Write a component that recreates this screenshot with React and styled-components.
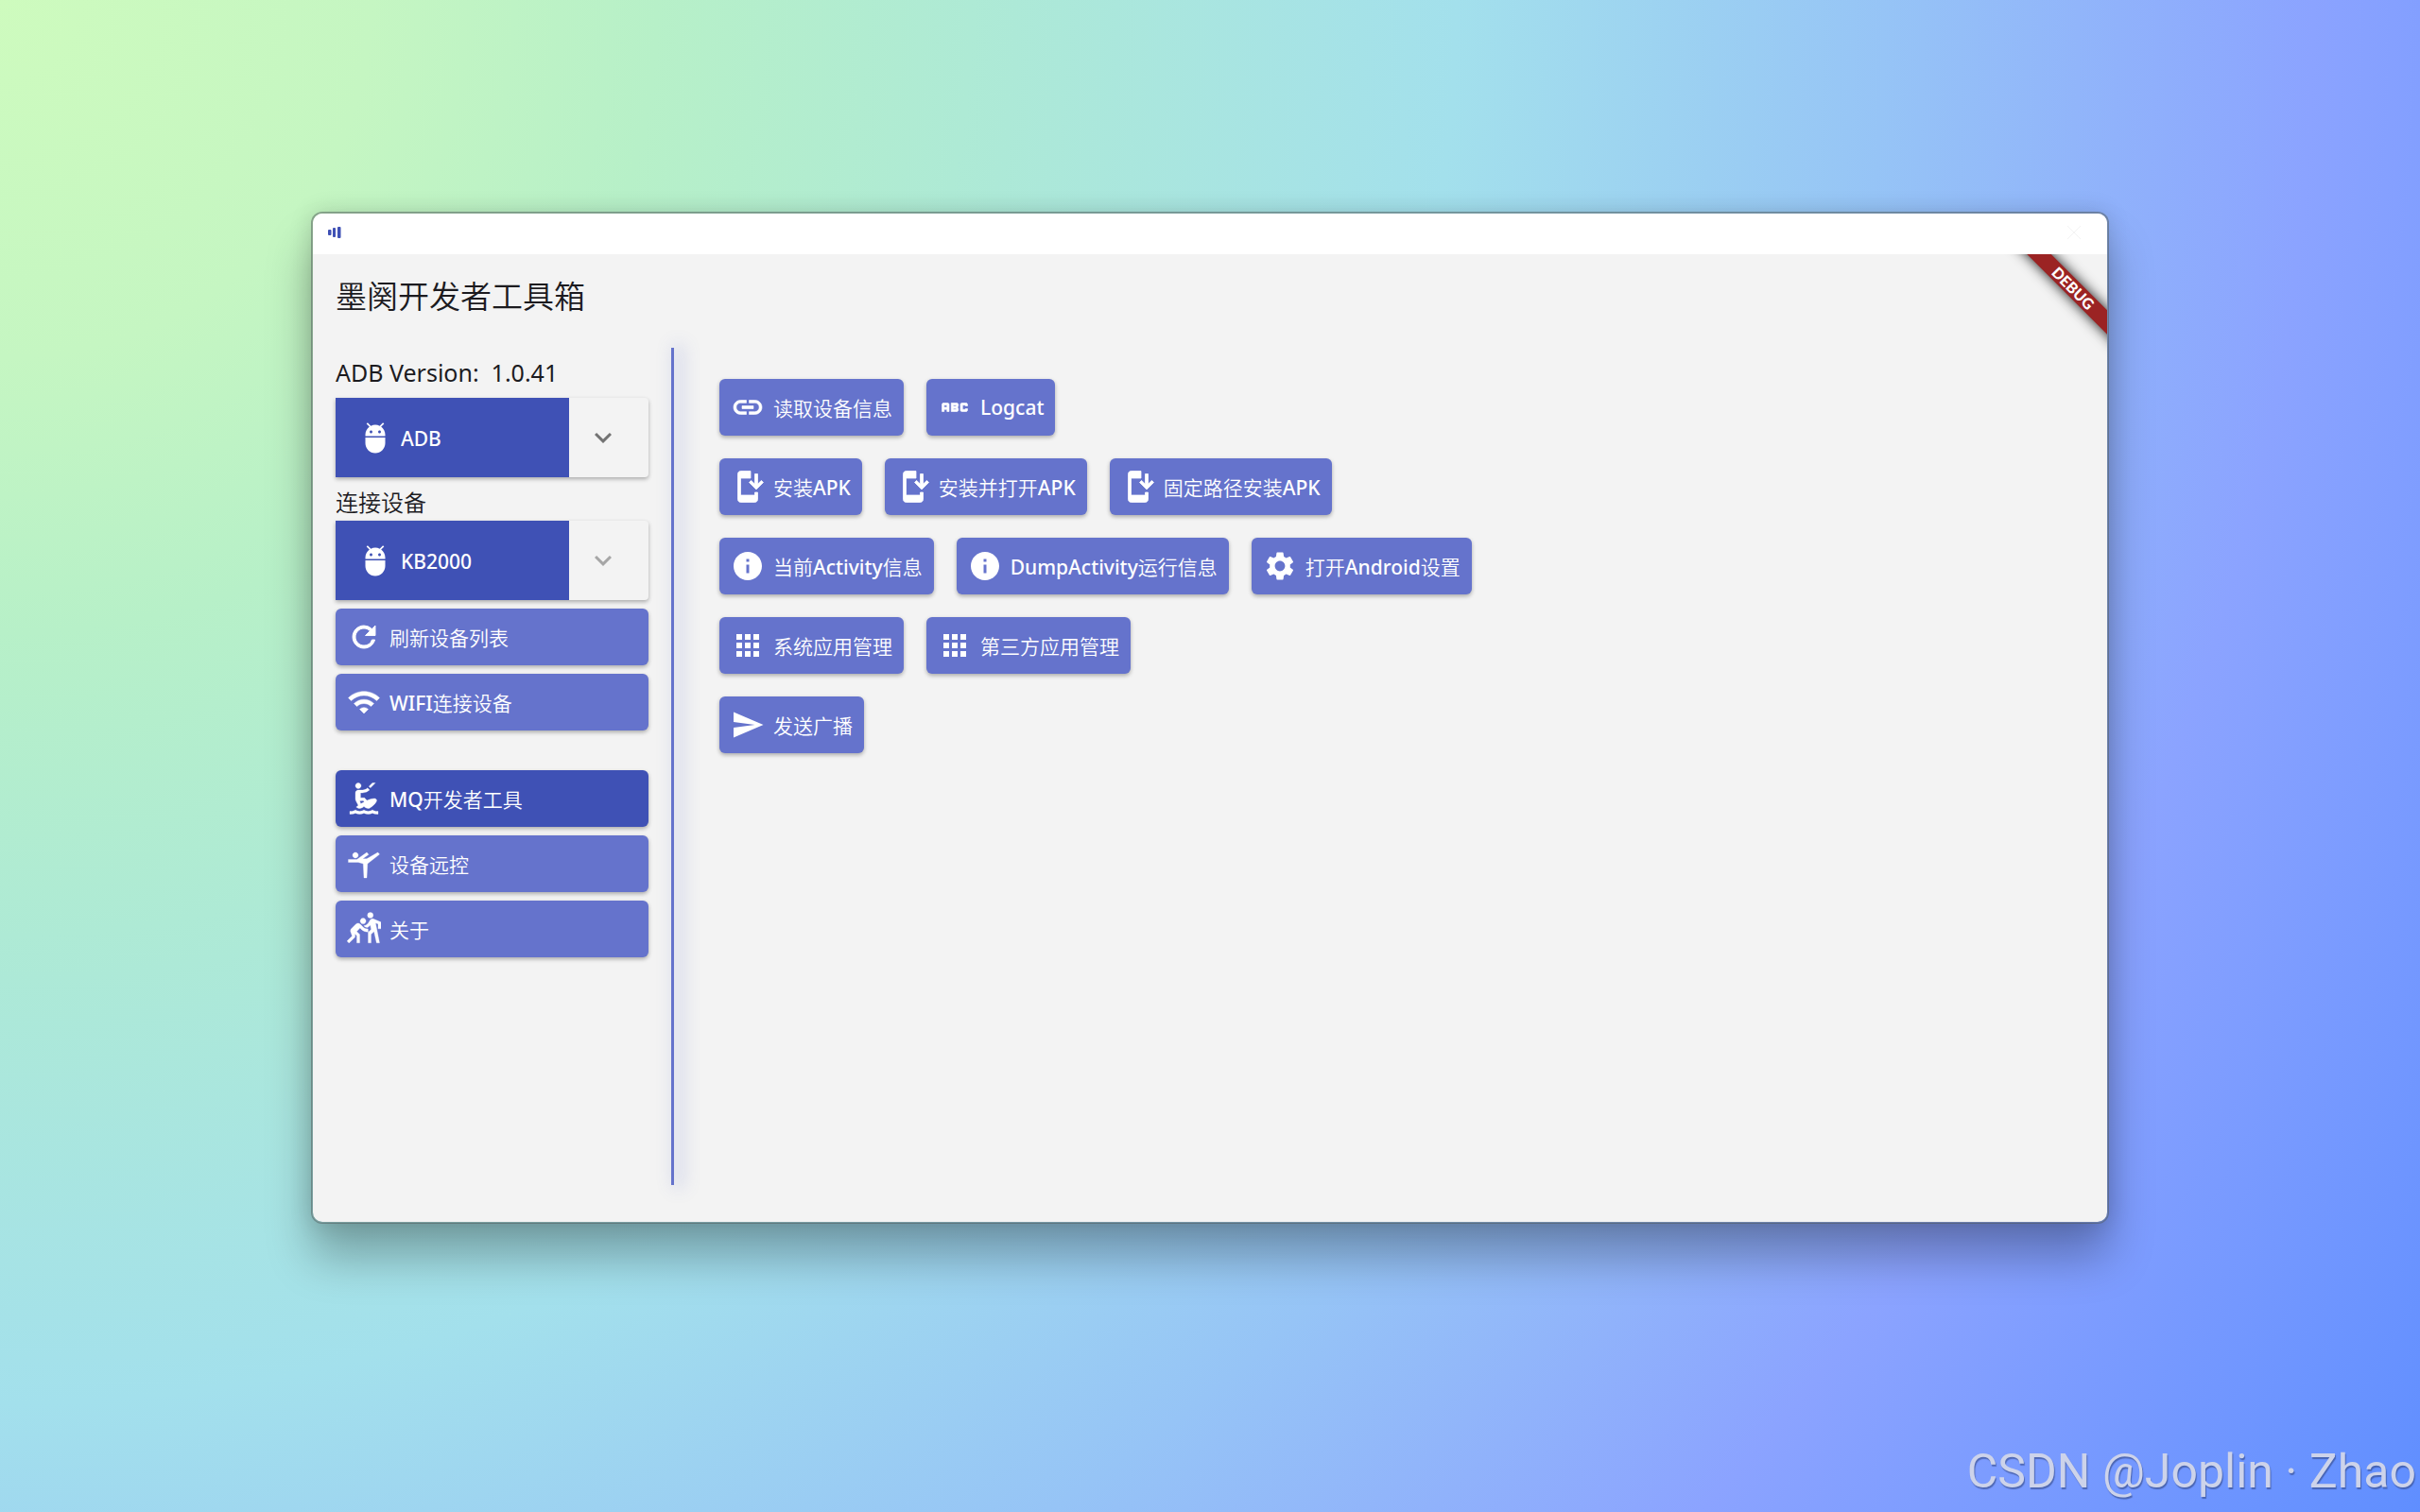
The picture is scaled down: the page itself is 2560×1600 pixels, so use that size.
import { useState } from "react";
import styled, { createGlobalStyle } from "styled-components";
import {
  MdAbc,
  MdAdb,
  MdApps,
  MdExpandMore,
  MdInfo,
  MdInstallMobile,
  MdKitesurfing,
  MdLink,
  MdRefresh,
  MdSend,
  MdSettings,
  MdSportsGymnastics,
  MdSportsKabaddi,
  MdWifi,
} from "react-icons/md";

const GlobalStyle = createGlobalStyle`
  * {
    box-sizing: border-box;
  }
  body {
    margin: 0;
    color: #1c1b1f;
    font-family: "Noto Sans", "Noto Sans CJK SC", sans-serif;
  }
`;

const Desktop = styled.div`
  position: relative;
  display: flex;
  min-height: 100vh;
  padding: 224px 329px 305px;
  overflow: hidden;
  background: radial-gradient(
    118% 182% at 0 0,
    #cefbbe 0%,
    #c5f6c2 13%,
    #b7f0c8 23%,
    #aeead5 34%,
    #a3e0ec 51%,
    #96c4f6 66%,
    #8ba3ff 81%,
    #5b8cff 103%
  );
`;

const Window = styled.main`
  display: flex;
  flex: 1;
  flex-direction: column;
  overflow: hidden;
  border: 2px solid rgba(80, 90, 90, 0.5);
  border-radius: 12px;
  background: #f3f3f3;
  background-clip: padding-box;
  box-shadow: 0 36px 48px rgba(0, 0, 0, 0.28), 0 0 24px rgba(0, 0, 0, 0.14);
`;

const TitleBar = styled.header`
  display: flex;
  align-items: center;
  justify-content: space-between;
  height: 43px;
  padding: 0 27px 3px 16px;
  background: #fff;
`;

const CloseButton = styled.button`
  display: flex;
  padding: 0;
  border: none;
  background: none;
  color: #f3f3f3;
`;

const Body = styled.div`
  position: relative;
  display: flex;
  flex: 1;
  flex-direction: column;
  overflow: hidden;
  padding: 24px 24px 39px;
`;

const Title = styled.h1`
  margin: 0 0 33px;
  font-size: 33px;
  font-weight: 350;
  line-height: 42px;
`;

const Columns = styled.div`
  display: flex;
  flex: 1;
`;

const Sidebar = styled.aside`
  display: flex;
  flex-direction: column;
  width: 331px;
  padding-top: 9px;
`;

const FieldLabel = styled.label`
  height: ${(props) => (props.$version ? "44px" : "46px")};
  padding-top: ${(props) => (props.$version ? "0" : "9px")};
  font-size: ${(props) => (props.$version ? "25px" : "24px")};
  font-weight: ${(props) => (props.$version ? 400 : 350)};
  line-height: ${(props) => (props.$version ? "34px" : "36px")};
  white-space: pre;
`;

const Picker = styled.div`
  display: grid;
  grid-template-columns: 1fr 84px;
  height: 84px;
  border-radius: 0 4px 4px 0;
  box-shadow: 0 2px 4px rgba(0, 0, 0, 0.3);
  color: #fff;

  select {
    grid-area: 1 / 1 / 2 / 3;
    padding: 2px 0 0 69px;
    border: none;
    background: none;
    appearance: none;
    color: inherit;
    font: 500 21px "Noto Sans", "Noto Sans CJK SC", sans-serif;
  }
  option {
    color: #1c1b1f;
  }
`;

const PickerFace = styled.div`
  grid-area: 1 / 1;
  display: flex;
  align-items: center;
  padding-left: 24px;
  background: #3f51b5;
`;

const PickerArrow = styled.div`
  grid-area: 1 / 2;
  display: flex;
  align-items: center;
  padding-left: 18px;
  color: ${(props) => (props.$dim ? "#a6a6a6" : "#737373")};
`;

const Actions = styled.div`
  display: flex;
  flex-direction: column;
  gap: 9px;
  margin-top: ${(props) => (props.$apart ? "42px" : "9px")};
`;

const ToolButton = styled.button`
  display: flex;
  align-items: center;
  gap: 9px;
  height: 60px;
  padding: 0 12px;
  border: none;
  border-radius: 6px;
  background: ${(props) => (props.$active ? "#3f51b5" : "#6573cc")};
  box-shadow: 0 2px 4px rgba(0, 0, 0, 0.3);
  color: #fff;
  font-family: inherit;
  font-size: 21px;
  font-weight: 350;
  white-space: nowrap;
  cursor: pointer;

  svg {
    flex: none;
  }
  /* the icons carry an unfilled bounding box that must not pick up the stroke */
  svg [fill="none"] {
    stroke: none;
  }
`;

const Latin = styled.b`
  font-weight: 500;
`;

const Divider = styled.div`
  width: 3px;
  margin-left: 24px;
  background: #6573cc;
  box-shadow: 6px 0 18px 3px rgba(101, 115, 204, 0.25);
`;

const Panel = styled.section`
  display: flex;
  flex: 1;
  flex-direction: column;
  gap: 24px;
  padding: 33px 0 0 48px;
`;

const PanelRow = styled.div`
  display: flex;
  gap: 24px;
`;

const DebugBanner = styled.div`
  position: absolute;
  top: 27px;
  right: -44px;
  width: 160px;
  height: 18px;
  transform: rotate(45deg);
  background: #9b2323;
  box-shadow: 0 0 14px rgba(0, 0, 0, 0.9);
  color: #fff;
  font: 900 16px/17px Lato, sans-serif;
  text-align: center;
`;

const Watermark = styled.div`
  position: absolute;
  right: 4px;
  bottom: 7px;
  color: #cdd3ea;
  font-family: Roboto, sans-serif;
  font-size: 50px;
  line-height: 72px;
  text-shadow: 1px 2px 1px rgba(50, 70, 130, 0.6);
`;

const navItems = [
  { label: "MQ开发者工具", icon: MdKitesurfing },
  { label: "设备远控", icon: MdSportsGymnastics },
  { label: "关于", icon: MdSportsKabaddi },
];

const toolRows = [
  [
    { label: "读取设备信息", icon: MdLink, stroke: 0.4 },
    { label: "Logcat", icon: MdAbc, stroke: 0.4 },
  ],
  [
    { label: "安装APK", icon: MdInstallMobile, stroke: 0.5 },
    { label: "安装并打开APK", icon: MdInstallMobile, stroke: 0.5 },
    { label: "固定路径安装APK", icon: MdInstallMobile, stroke: 0.5 },
  ],
  [
    { label: "当前Activity信息", icon: MdInfo },
    { label: "DumpActivity运行信息", icon: MdInfo },
    { label: "打开Android设置", icon: MdSettings },
  ],
  [
    { label: "系统应用管理", icon: MdApps },
    { label: "第三方应用管理", icon: MdApps },
  ],
  [{ label: "发送广播", icon: MdSend }],
];

function AppLogo() {
  return (
    <svg width="14" height="12" viewBox="0 0 14 12" fill="#3f51b5">
      <rect x="0" y="3" width="3.5" height="6" rx="1" />
      <rect x="5" y="1" width="3" height="10" rx="1" />
      <rect x="10" y="0" width="3.5" height="12" rx="1" />
    </svg>
  );
}

function Action({ label, icon: Icon, stroke = 0, active, onClick }) {
  return (
    <ToolButton type="button" $active={active} onClick={onClick}>
      <Icon size={36} strokeWidth={stroke} />
      <span>
        {label
          .split(/([A-Za-z]+)/)
          .map((part, i) => (i % 2 ? <Latin key={i}>{part}</Latin> : part))}
      </span>
    </ToolButton>
  );
}

function DevicePicker({ id, options, dim }) {
  return (
    <Picker>
      <PickerFace>
        <MdAdb size={36} />
      </PickerFace>
      <PickerArrow $dim={dim}>
        <MdExpandMore size={36} />
      </PickerArrow>
      <select id={id}>
        {options.map((option) => (
          <option key={option}>{option}</option>
        ))}
      </select>
    </Picker>
  );
}

function App() {
  const [page, setPage] = useState("MQ开发者工具");

  return (
    <Desktop>
      <GlobalStyle />
      <Window>
        <TitleBar>
          <AppLogo />
          <CloseButton type="button" aria-label="关闭">
            <svg width="16" height="16" viewBox="0 0 16 16" stroke="currentColor">
              <path d="M1 1l14 14M15 1L1 15" />
            </svg>
          </CloseButton>
        </TitleBar>
        <Body>
          <Title>墨阕开发者工具箱</Title>
          <Columns>
            <Sidebar>
              <FieldLabel htmlFor="adb" $version>
                {"ADB Version:  1.0.41"}
              </FieldLabel>
              <DevicePicker id="adb" options={["ADB"]} />
              <FieldLabel htmlFor="device">连接设备</FieldLabel>
              <DevicePicker id="device" options={["KB2000"]} dim />
              <Actions>
                <Action label="刷新设备列表" icon={MdRefresh} stroke={0.6} />
                <Action label="WIFI连接设备" icon={MdWifi} stroke={0.3} />
              </Actions>
              <Actions as="nav" $apart>
                {navItems.map((item) => (
                  <Action
                    key={item.label}
                    {...item}
                    stroke={0.2}
                    active={item.label === page}
                    onClick={() => setPage(item.label)}
                  />
                ))}
              </Actions>
            </Sidebar>
            <Divider />
            <Panel>
              {toolRows.map((row) => (
                <PanelRow key={row[0].label}>
                  {row.map((tool) => (
                    <Action key={tool.label} {...tool} />
                  ))}
                </PanelRow>
              ))}
            </Panel>
          </Columns>
          <DebugBanner>DEBUG</DebugBanner>
        </Body>
      </Window>
      <Watermark>CSDN @Joplin · Zhao</Watermark>
    </Desktop>
  );
}

export default App;
